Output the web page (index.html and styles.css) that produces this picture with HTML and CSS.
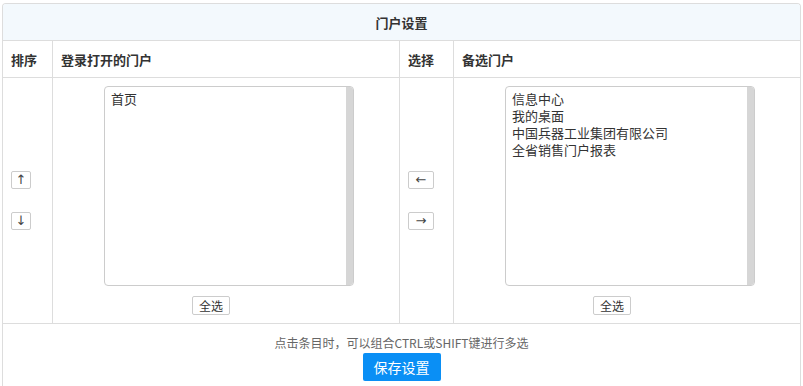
FILE: index.html
```html
<!DOCTYPE html>
<html lang="zh-CN">
<head>
    <meta charset="UTF-8">
    <title>门户设置</title>
    <link rel="stylesheet" href="styles.css">
</head>
<body>
    <div class="panel">
        <table class="portal-table">
            <tr class="title-row">
                <th colspan="4">门户设置</th>
            </tr>
            <tr class="head-row">
                <th class="col-sort">排序</th>
                <th class="col-list">登录打开的门户</th>
                <th class="col-choose">选择</th>
                <th class="col-list">备选门户</th>
            </tr>
            <tr class="body-row">
                <td class="col-sort">
                    <div class="arrows">
                        <button class="arrow">↑</button>
                        <button class="arrow">↓</button>
                    </div>
                </td>
                <td class="col-list">
                    <div class="listbox">
                        <div class="item">首页</div>
                    </div>
                    <button class="select-all">全选</button>
                </td>
                <td class="col-choose">
                    <div class="arrows">
                        <button class="arrow wide">←</button>
                        <button class="arrow wide">→</button>
                    </div>
                </td>
                <td class="col-list">
                    <div class="listbox">
                        <div class="item">信息中心</div>
                        <div class="item">我的桌面</div>
                        <div class="item">中国兵器工业集团有限公司</div>
                        <div class="item">全省销售门户报表</div>
                    </div>
                    <button class="select-all">全选</button>
                </td>
            </tr>
            <tr class="foot-row">
                <td colspan="4">
                    <p class="tip">点击条目时，可以组合CTRL或SHIFT键进行多选</p>
                    <button class="save">保存设置</button>
                </td>
            </tr>
        </table>
    </div>
</body>
</html>
```

FILE: styles.css
```css
body {
    margin: 3px 2px 0 2px;
    font-family: "Noto Sans CJK SC", "Liberation Sans", sans-serif;
    font-size: 13px;
    color: #333;
    background: #fff;
}
.panel {
    border: 1px solid #ddd;
    border-bottom: none;
    border-radius: 4px 4px 0 0;
    overflow: hidden;
    height: 400px;
}
.portal-table {
    width: 100%;
    border-collapse: collapse;
}
.portal-table th,
.portal-table td {
    border: 1px solid #ddd;
    padding: 0;
}
.portal-table tr:first-child th {
    border-top: none;
}
.portal-table th:first-child,
.portal-table td:first-child {
    border-left: none;
}
.portal-table th:last-child,
.portal-table td:last-child {
    border-right: none;
}
.title-row th {
    height: 36px;
    background: #f3f9fd;
    font-weight: bold;
    text-align: center;
}
.head-row th {
    height: 36px;
    text-align: left;
    padding-left: 8px;
    font-weight: bold;
}
.col-sort {
    width: 41px;
}
.col-choose {
    width: 45px;
}
.body-row td {
    height: 237px;
    vertical-align: middle;
}
.body-row .col-list {
    vertical-align: top;
    padding-top: 8px;
    padding-left: 51px;
}
.arrows {
    display: flex;
    flex-direction: column;
    align-items: flex-start;
    gap: 23px;
    padding-left: 8px;
}
.arrow {
    display: block;
    width: 20px;
    height: 18px;
    padding: 0;
    border: 1px solid #ccc;
    border-radius: 2px;
    background: #fff;
    font-family: "DejaVu Sans", sans-serif;
    font-size: 13px;
    line-height: 16px;
    color: #444;
}
.arrow.wide {
    width: 26px;
}
.listbox {
    position: relative;
    width: 248px;
    height: 195px;
    border: 1px solid #ccc;
    border-radius: 4px;
    padding-top: 3px;
}
.listbox::after {
    content: "";
    position: absolute;
    top: 0;
    right: 0;
    width: 7px;
    height: 100%;
    background: #d6d6d6;
    border-radius: 0 3px 3px 0;
}
.item {
    padding-left: 6px;
    line-height: 17px;
    font-size: 13px;
}
.select-all {
    display: block;
    margin: 10px 0 0 88px;
    height: 19px;
    width: 38px;
    padding: 0;
    border: 1px solid #ccc;
    border-radius: 2px;
    background: #fff;
    font-family: "Noto Sans CJK SC", sans-serif;
    font-size: 12px;
    line-height: 16px;
    color: #333;
}
.foot-row td {
    height: 80px;
    text-align: center;
    vertical-align: top;
    padding-top: 10px;
}
.tip {
    margin: 0;
    font-size: 12px;
    line-height: 18px;
    color: #666;
}
.save {
    margin-top: 1px;
    width: 78px;
    height: 28px;
    border: none;
    border-radius: 2px;
    background: #0a8ff5;
    color: #fff;
    font-family: "Noto Sans CJK SC", sans-serif;
    font-size: 14px;
}
```
